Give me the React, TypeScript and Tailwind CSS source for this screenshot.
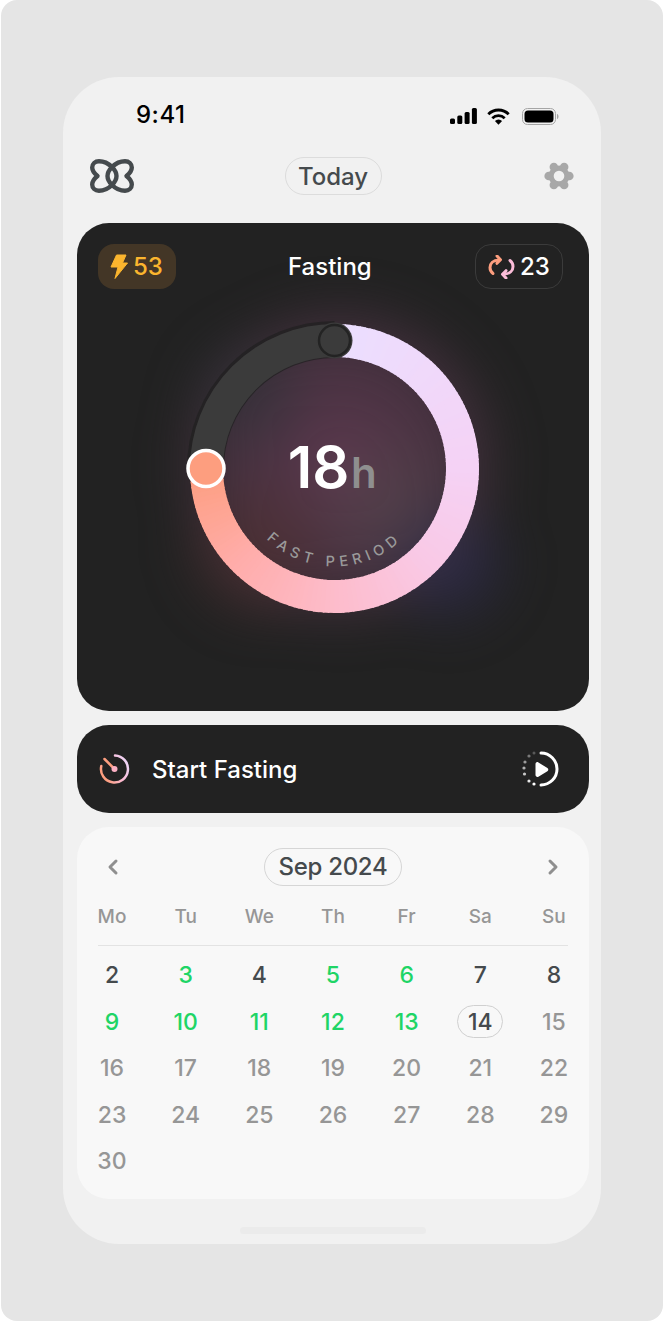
const days = ["Mo", "Tu", "We", "Th", "Fr", "Sa", "Su"];
const fastedDays = [3, 5, 6, 9, 10, 11, 12, 13];
const monthDays = Array.from({ length: 29 }, (_, i) => i + 2);

// colour stops along the arc, degrees clockwise from the top
const arcStops: [number, number[]][] = [
  [0, [235, 223, 255]],
  [90, [245, 210, 245]],
  [135, [249, 201, 230]],
  [180, [253, 188, 203]],
  [225, [255, 173, 171]],
  [270, [253, 158, 127]],
];

function arcColor(deg: number) {
  for (let i = 0; i < arcStops.length - 1; i++) {
    const [a, ca] = arcStops[i];
    const [b, cb] = arcStops[i + 1];
    if (deg <= b) {
      const t = (deg - a) / (b - a);
      const c = ca.map((v, k) => Math.round(v + (cb[k] - v) * t));
      return `rgb(${c[0]},${c[1]},${c[2]})`;
    }
  }
  return "rgb(253,158,127)";
}

const CX = 201.5;
const CY = 199.5;
const R = 128;

function polar(deg: number, r = R) {
  const rad = (deg * Math.PI) / 180;
  return { x: CX + r * Math.sin(rad), y: CY - r * Math.cos(rad) };
}

const segments = Array.from({ length: 135 }, (_, i) => i * 2);

function Logo() {
  return (
    <svg width="44" height="34" viewBox="0 0 44 34" fill="none" stroke="#454a4d" strokeWidth="4.4" strokeLinejoin="round">
      <path d="M22 8C18 4 14 2.200 9 2.200 5 2.200 2.200 5 2.200 8.500 2.200 12 4.500 14.500 7.500 17 4.500 19.500 2.200 22 2.200 25.500 2.200 29 5 31.800 9 31.800 14 31.800 18 30 22 26 25 23 26.500 20 26.500 17 26.500 14 25 11 22 8z" />
      <path d="M22 8C26 4 30 2.200 35 2.200 39 2.200 41.800 5 41.800 8.500 41.800 12 39.500 14.500 36.500 17 39.500 19.500 41.800 22 41.800 25.500 41.800 29 39 31.800 35 31.800 30 31.800 26 30 22 26 19 23 17.500 20 17.500 17 17.500 14 19 11 22 8z" />
    </svg>
  );
}

function Gear() {
  return (
    <svg width="30" height="28" viewBox="0 0 30 28" fill="#a8a8a8">
      <circle cx="15" cy="14" r="10.500" />
      {[0, 60, 120, 180, 240, 300].map((a) => (
        <circle
          key={a}
          cx={15 + 10.3 * Math.cos((a * Math.PI) / 180)}
          cy={14 + 10.3 * Math.sin((a * Math.PI) / 180)}
          r="4.300"
        />
      ))}
      <circle cx="15" cy="14" r="5.300" fill="#f1f1f1" />
    </svg>
  );
}

function StatusIcons() {
  return (
    <div className="flex items-center mt-[2px]">
      <svg width="27" height="16" viewBox="0 0 27 16" fill="#000" className="mr-[10px]">
        <rect x="0" y="10.500" width="5" height="5.500" rx="1.500" />
        <rect x="7.300" y="7.500" width="5" height="8.500" rx="1.500" />
        <rect x="14.600" y="4" width="5" height="12" rx="1.500" />
        <rect x="21.900" y="0" width="5" height="16" rx="1.500" />
      </svg>
      <svg width="23" height="17" viewBox="0 0 23 17" fill="none" stroke="#000" strokeWidth="2.800" className="mr-[12px]">
        <path d="M1.300 6.200a14.500 14.500 0 0 1 20.400 0" />
        <path d="M5.300 10.200a8.800 8.800 0 0 1 12.400 0" />
        <path d="M11.500 16.800l-3.600-3.700a5 5 0 0 1 7.200 0z" fill="#000" stroke="none" />
      </svg>
      <svg width="37" height="17" viewBox="0 0 37 17">
        <rect x="0.500" y="0.500" width="33" height="16" rx="5" fill="none" stroke="#a5a5a5" />
        <rect x="2.500" y="2.500" width="29" height="12" rx="3.500" fill="#000" />
        <path d="M35 6c1 .3 1.500 1.300 1.500 2.500s-.5 2.200-1.500 2.500z" fill="#a5a5a5" />
      </svg>
    </div>
  );
}

function Bolt() {
  return (
    <svg width="18" height="25" viewBox="0 0 18 25">
      <path d="M6.500 1h9.500l-3.500 8h5L5 24.500l3-11.500H1z" fill="#fbb52e" stroke="#fbb52e" strokeLinejoin="round" strokeWidth="1" />
    </svg>
  );
}

function Cycle() {
  return (
    <svg width="27" height="24" viewBox="0 0 27 24" fill="none" strokeWidth="3" strokeLinecap="round" strokeLinejoin="round">
      <path d="M11 5C5 5 2 8.500 2 12.500c0 2.500 1 4.500 3 6" stroke="#fd9e7f" />
      <path d="M9 1l3.500 3.700L9 8.300" stroke="#fd9e7f" />
      <path d="M16 19c6 0 9-3.500 9-7.500 0-2.500-1-4.500-3-6" stroke="#fbbcd8" />
      <path d="M18 23l-3.500-3.700L18 15.700" stroke="#fbbcd8" />
    </svg>
  );
}

function Timer() {
  return (
    <svg width="32" height="32" viewBox="0 0 32 32" fill="none" strokeLinecap="round">
      <defs>
        <linearGradient id="timerGrad" x1="0" y1="0.500" x2="1" y2="0">
          <stop offset="0" stopColor="#fd9e7f" />
          <stop offset="0.500" stopColor="#fbbcd8" />
          <stop offset="1" stopColor="#e9dcff" />
        </linearGradient>
      </defs>
      <path d="M16 2.500A13.500 13.500 0 1 1 2.300 13" stroke="url(#timerGrad)" strokeWidth="2.500" />
      <path d="M5.500 6L15.500 16" stroke="#fd9e7f" strokeWidth="2.500" />
      <circle cx="15.500" cy="16" r="3" fill="#fbb0c4" />
    </svg>
  );
}

function PlayRing() {
  return (
    <svg width="38" height="38" viewBox="0 0 38 38" fill="none">
      <path d="M19 3A16 16 0 0 1 19 35" stroke="#fff" strokeWidth="3" strokeLinecap="round" />
      <circle cx="12" cy="3" r="1.500" fill="#fff" fillOpacity="0.250" />
      <circle cx="7" cy="6" r="1.600" fill="#fff" fillOpacity="0.400" />
      <circle cx="3" cy="12" r="1.600" fill="#fff" fillOpacity="0.550" />
      <circle cx="2" cy="18" r="1.600" fill="#fff" fillOpacity="0.650" />
      <circle cx="2.500" cy="24" r="1.600" fill="#fff" fillOpacity="0.750" />
      <circle cx="7" cy="31" r="1.600" fill="#fff" fillOpacity="0.900" />
      <circle cx="12" cy="34" r="1.600" fill="#fff" />
      <path d="M13.500 14c0-1.500 1.600-2.400 2.900-1.600l9 5.500c1.200.8 1.200 2.500 0 3.300l-9 5.500c-1.300.8-2.900-.1-2.900-1.600z" fill="#fff" />
    </svg>
  );
}

function FastingRing() {
  return (
    <svg width="400" height="400" viewBox="0 0 400 400" className="block mx-auto overflow-visible" fontFamily="Inter, sans-serif">
      <defs>
        <filter id="soft" x="-40%" y="-40%" width="180%" height="180%" colorInterpolationFilters="sRGB">
          <feGaussianBlur stdDeviation="18" />
        </filter>
        <radialGradient id="glowPink">
          <stop offset="0" stopColor="#5c384e" stopOpacity="1" />
          <stop offset="0.600" stopColor="#4e3546" stopOpacity="0.850" />
          <stop offset="1" stopColor="#4e3546" stopOpacity="0" />
        </radialGradient>
        <radialGradient id="glowRed">
          <stop offset="0" stopColor="#4f3032" stopOpacity="0.800" />
          <stop offset="1" stopColor="#4f3032" stopOpacity="0" />
        </radialGradient>
        <radialGradient id="glowBlue">
          <stop offset="0" stopColor="#2e2b4a" stopOpacity="0.900" />
          <stop offset="1" stopColor="#2e2b4a" stopOpacity="0" />
        </radialGradient>
        <radialGradient id="glowSlate">
          <stop offset="0" stopColor="#2e3238" stopOpacity="0.600" />
          <stop offset="1" stopColor="#2e3238" stopOpacity="0" />
        </radialGradient>
        <radialGradient id="glowGrey">
          <stop offset="0" stopColor="#55504f" stopOpacity="0.400" />
          <stop offset="1" stopColor="#55504f" stopOpacity="0" />
        </radialGradient>
        <path id="fastLabel" d="M103.500 199.500a98 98 0 0 0 196 0" />
      </defs>

      <g filter="url(#soft)">
        <circle cx="207" cy="195" r="178" fill="url(#glowPink)" />
        <circle cx="115" cy="125" r="75" fill="url(#glowSlate)" />
        <circle cx="125" cy="280" r="90" fill="url(#glowRed)" />
        <circle cx="315" cy="295" r="80" fill="url(#glowBlue)" />
        <circle cx="255" cy="235" r="90" fill="url(#glowGrey)" />
      </g>

      {/* grey track with its dark edge */}
      <path d={`M${CX} ${CY - 129}A129 129 0 0 0 ${CX - 129} ${CY}`} fill="none" stroke="#1f1f1f" strokeOpacity="0.700" strokeWidth="37" />
      <path d={`M${CX} ${CY - R}A${R} ${R} 0 0 0 ${CX - R} ${CY}`} fill="none" stroke="#3b3b3b" strokeWidth="33" />

      {segments.map((deg) => {
        const a = polar(deg);
        const b = polar(Math.min(deg + 2.6, 270));
        return (
          <path
            key={deg}
            d={`M${a.x} ${a.y}A${R} ${R} 0 0 1 ${b.x} ${b.y}`}
            fill="none"
            stroke={arcColor(deg + 1)}
            strokeWidth="33"
          />
        );
      })}

      <circle cx={CX} cy={CY - R} r="18" fill="#3b3b3b" />
      <circle cx={CX} cy={CY - R} r="15.500" fill="#3b3b3b" stroke="#232323" strokeWidth="2.500" />
      <circle cx={CX - R - 0.5} cy={CY} r="18" fill="#fd9e7f" stroke="#fff" strokeWidth="3.500" />

      <text x="154.700" y="218.500" fontSize="58" fontWeight="600" fill="#fff">18</text>
      <text x="218" y="218.500" fontSize="42" fontWeight="600" fill="#8f8f8f">h</text>
      <text fontSize="14.500" fontWeight="500" letterSpacing="5.200" fill="#9a9a9a">
        <textPath href="#fastLabel" startOffset="50%" textAnchor="middle">FAST PERIOD</textPath>
      </text>
    </svg>
  );
}

export default function App() {
  return (
    <div className="w-[664px] h-[1321px] bg-white font-['Inter',sans-serif]">
      <div className="mx-px h-full rounded-[16px] bg-[#e5e5e5] pt-[77px] px-[62px]">
        <div className="h-[1167px] rounded-[56px] bg-[#f1f1f1] pl-[14px] pr-[12px] flex flex-col">
          {/* STATUS BAR */}
          <div className="flex items-center justify-between h-[76px] pl-[59px] pr-[30px]">
            <span className="text-[24px] leading-none font-medium tracking-[0.5px] text-black">9:41</span>
            <StatusIcons />
          </div>

          {/* TOP NAV */}
          <div className="grid grid-cols-[1fr_auto_1fr] items-center h-[46px] pl-[13px] pr-[15px]">
            <Logo />
            <span className="rounded-full border border-[#dcdcdc] w-[97px] h-[38px] flex items-center justify-center pt-[2px] text-[24px] font-medium text-[#454a4d] ml-[2px]">
              Today
            </span>
            <div className="justify-self-end">
              <Gear />
            </div>
          </div>

          {/* FASTING CARD */}
          <div className="mt-[24px] h-[488px] rounded-[32px] bg-[#222222] overflow-hidden">
            <div className="relative z-10 flex items-center pt-[21px] pl-[21px] pr-[26px] h-[66px]">
              <div className="flex items-center gap-[5px] h-[45px] w-[78px] pl-[12px] rounded-[16px] bg-[#433626] text-[24px] font-medium text-[#fbb52e]">
                <Bolt />
                <span>53</span>
              </div>
              <span className="ml-[112px] text-[24px] font-medium text-white">Fasting</span>
              <div className="ml-auto flex items-center gap-[5px] h-[45px] w-[88px] pl-[12px] rounded-[16px] border border-[#3b3b3b] text-[24px] font-medium text-white">
                <Cycle />
                <span>23</span>
              </div>
            </div>
            <div className="mt-[-20px]">
              <FastingRing />
            </div>
          </div>

          {/* START */}
          <div className="mt-[14px] h-[88px] rounded-[32px] bg-[#222222] flex items-center justify-between pl-[22px] pr-[29px]">
            <div className="flex items-center gap-[21px]">
              <Timer />
              <span className="pt-[2px] text-[24px] font-medium text-white">Start Fasting</span>
            </div>
            <PlayRing />
          </div>

          {/* CALENDAR */}
          <div className="mt-[14px] h-[372px] rounded-[32px] bg-[#f8f8f8] px-[21px] pt-[21px]">
            <div className="flex items-center justify-between px-[9px]">
              <svg width="12" height="18" viewBox="0 0 12 18" fill="none" stroke="#8f8f8f" strokeWidth="3" strokeLinecap="round" strokeLinejoin="round">
                <path d="M9 3L3 9l6 6" />
              </svg>
              <span className="rounded-full border border-[#d6d6d6] h-[38px] w-[138px] flex items-center justify-center text-[24px] tracking-[-0.3px] font-medium text-[#454a4d]">
                Sep 2024
              </span>
              <svg width="12" height="18" viewBox="0 0 12 18" fill="none" stroke="#8f8f8f" strokeWidth="3" strokeLinecap="round" strokeLinejoin="round">
                <path d="M3 3l6 6-6 6" />
              </svg>
            </div>

            <div className="mt-[20px] grid grid-cols-[repeat(7,28px)] justify-between border-b border-[#e3e3e3] pb-[17px]">
              {days.map((d) => (
                <span key={d} className="flex justify-center text-[19px] leading-[22px] font-medium text-[#969696]">
                  {d}
                </span>
              ))}
            </div>

            <div className="mt-[6px] grid grid-cols-[repeat(7,28px)] justify-between auto-rows-[46.500px]">
              {monthDays.map((n) => (
                <div key={n} className="flex items-center justify-center">
                  <span
                    className={
                      n === 14
                        ? "shrink-0 w-[46px] h-[33px] rounded-full border border-[#d0d0d0] flex items-center justify-center text-[23px] font-medium text-[#454a4d]"
                        : fastedDays.includes(n)
                          ? "text-[23px] font-medium text-[#1fd566]"
                          : n < 14
                            ? "text-[23px] font-medium text-[#454a4d]"
                            : "text-[23px] font-medium text-[#969696]"
                    }
                  >
                    {n}
                  </span>
                </div>
              ))}
            </div>
          </div>

          {/* HOME BAR */}
          <div className="mt-[28px] mx-auto w-[186px] h-[7px] rounded-full bg-[#ebebeb]" />
        </div>
      </div>
    </div>
  );
}
